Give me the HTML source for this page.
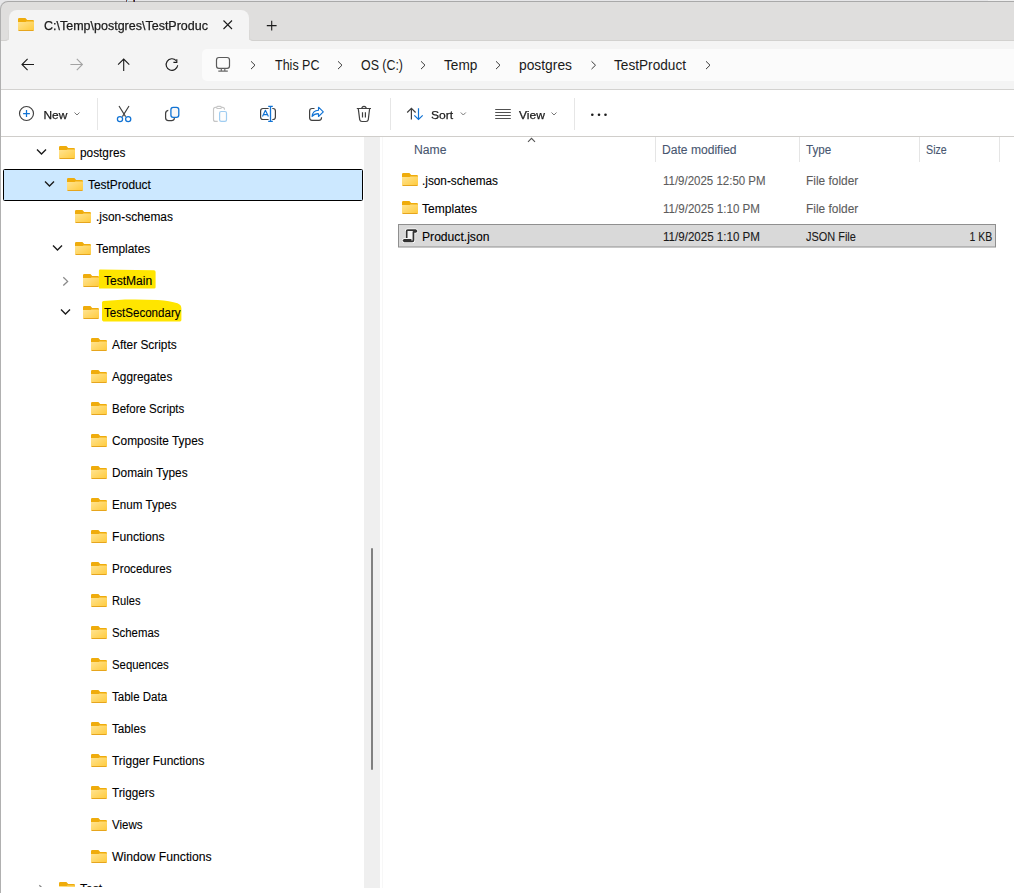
<!DOCTYPE html>
<html><head><meta charset="utf-8">
<style>
html,body{margin:0;padding:0;width:1014px;height:893px;overflow:hidden;background:#e6e6e8;font-family:"Liberation Sans", sans-serif;}
.a{position:absolute;}
svg text{font-family:"Liberation Sans", sans-serif;}
</style></head><body>
<div class="a" style="left:0;top:1px;width:1030px;height:900px;background:#dfdedd;border-top:1px solid #a9a9a9;border-left:1px solid #b0b0b0;border-top-left-radius:8px;box-sizing:border-box;overflow:hidden">
</div>
<!-- nav bar -->
<div class="a" style="left:1px;top:40px;width:1013px;height:49px;background:#f4f4f4"></div>
<!-- tab -->
<div class="a" style="left:9px;top:10px;width:240px;height:31px;background:#f4f4f4;border-radius:8px 8px 0 0"></div>
<div class="a" style="left:1px;top:30px;width:8px;height:11px;box-sizing:border-box;background:#dfdedd;border-bottom:1px solid #d2d1cf;border-right:1px solid #d9d8d6;border-radius:0 0 4px 0"></div>
<div class="a" style="left:249px;top:30px;width:780px;height:11px;box-sizing:border-box;background:#dfdedd;border-bottom:1px solid #d2d1cf;border-left:1px solid #d9d8d6;border-radius:0 0 0 4px"></div>
<div class="a" style="left:202px;top:49px;width:830px;height:32px;background:#fbfbfb;border-radius:5px"></div>
<div class="a" style="left:1px;top:89px;width:1013px;height:1px;background:#d3d2d0"></div>
<!-- toolbar -->
<div class="a" style="left:1px;top:90px;width:1013px;height:46px;background:#fff"></div>
<div class="a" style="left:1px;top:136px;width:1013px;height:1px;background:#d0cecb"></div>
<!-- content -->
<div class="a" style="left:1px;top:137px;width:1013px;height:756px;background:#fff"></div>
<div class="a" style="left:364px;top:137px;width:16px;height:751px;background:#efefef"></div>
<div class="a" style="left:382px;top:137px;width:1px;height:751px;background:#f7f7f7"></div>
<div class="a" style="left:371px;top:548px;width:2px;height:222px;background:#808080;border-radius:1px"></div>
<div class="a" style="left:988px;top:0;width:26px;height:1px;background:#efefef"></div>
<div class="a" style="left:126px;top:0;width:1px;height:2px;background:#7d4a4a"></div>
<div class="a" style="left:127px;top:0;width:1px;height:2px;background:#9fd6f0"></div>
<div class="a" style="left:133px;top:0;width:1px;height:2px;background:#8a5a2a"></div>
<div class="a" style="left:134px;top:0;width:1px;height:2px;background:#2a2a6a"></div>
<svg class="a" style="left:0;top:0" width="1014" height="893" viewBox="0 0 1014 893">
<defs>
<linearGradient id="fg" x1="0" y1="0" x2="1" y2="1">
  <stop offset="0" stop-color="#ffe493"/><stop offset="1" stop-color="#ffca3a"/>
</linearGradient>
<symbol id="fld" viewBox="0 0 16 13">
  <path d="M0 1.2 Q0 0 1.2 0 H7.4 L9.2 2 H14.8 Q16 2 16 3.2 V5 H0 Z" fill="#efac0c"/>
  <path d="M0 4 H7.6 L8.6 3.4 H16 V11.8 Q16 13 14.8 13 H1.2 Q0 13 0 11.8 Z" fill="url(#fg)"/>
  <rect x="0.6" y="12" width="14.8" height="1" fill="#e6a51d"/>
</symbol>
</defs><clipPath id="navclip"><rect x="0" y="137" width="364" height="750"/></clipPath><g clip-path="url(#navclip)"><rect x="3.5" y="169.5" width="359" height="31" rx="1" fill="#cce8ff" stroke="#000" stroke-width="1"/><path d="M98.9 270.8 Q98.9 269.6 100.2 269.6 L154 270.3 Q155.6 270.5 155.6 272 V287.2 Q155.6 288.6 154.2 288.6 H100.3 Q98.9 288.9 98.9 287.5 Z" fill="#ffe500"/><path d="M102 302.5 Q102 301 103.5 300.9 L125 299.6 Q140 299.2 158 300 Q170 300.8 177.5 303.3 Q181.4 304.8 181.4 308.5 V320 Q181.4 321.4 180 321.4 H103.4 Q102 321.2 102 319.8 Z" fill="#ffe500"/><path d="M37.0 149.5 L41.5 154 L46.0 149.5" fill="none" stroke="#1b1b1b" stroke-width="1.35"/><use href="#fld" x="59" y="146" width="16" height="13"/><text x="80" y="157" font-size="12" fill="#000" stroke="#000" stroke-width="0.1" textLength="45.4" lengthAdjust="spacingAndGlyphs" >postgres</text><path d="M45.0 181.5 L49.5 186 L54.0 181.5" fill="none" stroke="#1b1b1b" stroke-width="1.35"/><use href="#fld" x="67" y="178" width="16" height="13"/><text x="88" y="189" font-size="12" fill="#000" stroke="#000" stroke-width="0.1" textLength="62.9" lengthAdjust="spacingAndGlyphs" >TestProduct</text><use href="#fld" x="75" y="210" width="16" height="13"/><text x="96" y="221" font-size="12" fill="#000" stroke="#000" stroke-width="0.1" textLength="77.0" lengthAdjust="spacingAndGlyphs" >.json-schemas</text><path d="M53.0 245.5 L57.5 250 L62.0 245.5" fill="none" stroke="#1b1b1b" stroke-width="1.35"/><use href="#fld" x="75" y="242" width="16" height="13"/><text x="96" y="253" font-size="12" fill="#000" stroke="#000" stroke-width="0.1" textLength="54.2" lengthAdjust="spacingAndGlyphs" >Templates</text><path d="M63.3 277.3 L67.6 281.4 L63.3 285.5" fill="none" stroke="#8a8a8a" stroke-width="1.3"/><use href="#fld" x="83" y="274" width="16" height="13"/><text x="104" y="285" font-size="12" fill="#000" stroke="#000" stroke-width="0.1" textLength="48.2" lengthAdjust="spacingAndGlyphs" >TestMain</text><path d="M61.0 309.5 L65.5 314 L70.0 309.5" fill="none" stroke="#1b1b1b" stroke-width="1.35"/><use href="#fld" x="83" y="306" width="16" height="13"/><text x="104" y="317" font-size="12" fill="#000" stroke="#000" stroke-width="0.1" textLength="76.6" lengthAdjust="spacingAndGlyphs" >TestSecondary</text><use href="#fld" x="91" y="338" width="16" height="13"/><text x="112" y="349" font-size="12" fill="#000" stroke="#000" stroke-width="0.1" textLength="64.7" lengthAdjust="spacingAndGlyphs" >After Scripts</text><use href="#fld" x="91" y="370" width="16" height="13"/><text x="112" y="381" font-size="12" fill="#000" stroke="#000" stroke-width="0.1" textLength="60.3" lengthAdjust="spacingAndGlyphs" >Aggregates</text><use href="#fld" x="91" y="402" width="16" height="13"/><text x="112" y="413" font-size="12" fill="#000" stroke="#000" stroke-width="0.1" textLength="72.3" lengthAdjust="spacingAndGlyphs" >Before Scripts</text><use href="#fld" x="91" y="434" width="16" height="13"/><text x="112" y="445" font-size="12" fill="#000" stroke="#000" stroke-width="0.1" textLength="91.7" lengthAdjust="spacingAndGlyphs" >Composite Types</text><use href="#fld" x="91" y="466" width="16" height="13"/><text x="112" y="477" font-size="12" fill="#000" stroke="#000" stroke-width="0.1" textLength="75.6" lengthAdjust="spacingAndGlyphs" >Domain Types</text><use href="#fld" x="91" y="498" width="16" height="13"/><text x="112" y="509" font-size="12" fill="#000" stroke="#000" stroke-width="0.1" textLength="64.5" lengthAdjust="spacingAndGlyphs" >Enum Types</text><use href="#fld" x="91" y="530" width="16" height="13"/><text x="112" y="541" font-size="12" fill="#000" stroke="#000" stroke-width="0.1" textLength="52.6" lengthAdjust="spacingAndGlyphs" >Functions</text><use href="#fld" x="91" y="562" width="16" height="13"/><text x="112" y="573" font-size="12" fill="#000" stroke="#000" stroke-width="0.1" textLength="59.5" lengthAdjust="spacingAndGlyphs" >Procedures</text><use href="#fld" x="91" y="594" width="16" height="13"/><text x="112" y="605" font-size="12" fill="#000" stroke="#000" stroke-width="0.1" textLength="28.5" lengthAdjust="spacingAndGlyphs" >Rules</text><use href="#fld" x="91" y="626" width="16" height="13"/><text x="112" y="637" font-size="12" fill="#000" stroke="#000" stroke-width="0.1" textLength="47.4" lengthAdjust="spacingAndGlyphs" >Schemas</text><use href="#fld" x="91" y="658" width="16" height="13"/><text x="112" y="669" font-size="12" fill="#000" stroke="#000" stroke-width="0.1" textLength="56.8" lengthAdjust="spacingAndGlyphs" >Sequences</text><use href="#fld" x="91" y="690" width="16" height="13"/><text x="112" y="701" font-size="12" fill="#000" stroke="#000" stroke-width="0.1" textLength="55.1" lengthAdjust="spacingAndGlyphs" >Table Data</text><use href="#fld" x="91" y="722" width="16" height="13"/><text x="112" y="733" font-size="12" fill="#000" stroke="#000" stroke-width="0.1" textLength="33.8" lengthAdjust="spacingAndGlyphs" >Tables</text><use href="#fld" x="91" y="754" width="16" height="13"/><text x="112" y="765" font-size="12" fill="#000" stroke="#000" stroke-width="0.1" textLength="92.5" lengthAdjust="spacingAndGlyphs" >Trigger Functions</text><use href="#fld" x="91" y="786" width="16" height="13"/><text x="112" y="797" font-size="12" fill="#000" stroke="#000" stroke-width="0.1" textLength="42.5" lengthAdjust="spacingAndGlyphs" >Triggers</text><use href="#fld" x="91" y="818" width="16" height="13"/><text x="112" y="829" font-size="12" fill="#000" stroke="#000" stroke-width="0.1" textLength="30.6" lengthAdjust="spacingAndGlyphs" >Views</text><use href="#fld" x="91" y="850" width="16" height="13"/><text x="112" y="861" font-size="12" fill="#000" stroke="#000" stroke-width="0.1" textLength="99.7" lengthAdjust="spacingAndGlyphs" >Window Functions</text><path d="M39.3 885.3 L43.6 889.4 L39.3 893.5" fill="none" stroke="#8a8a8a" stroke-width="1.3"/><use href="#fld" x="59" y="882" width="16" height="13"/><text x="80" y="893" font-size="12" fill="#000" stroke="#000" stroke-width="0.1" >Test</text></g><rect x="398.5" y="224.5" width="597" height="22.5" fill="#d9d9d9" stroke="#8f8f8f" stroke-width="1"/><rect x="655.0" y="137" width="1" height="25" fill="#e5e5e5"/><rect x="799.0" y="137" width="1" height="25" fill="#e5e5e5"/><rect x="919.0" y="137" width="1" height="25" fill="#e5e5e5"/><rect x="999.0" y="137" width="1" height="25" fill="#e5e5e5"/><path d="M528 141.8 L531.5 138.3 L535 141.8" fill="none" stroke="#555" stroke-width="1.1"/><text x="414" y="154" font-size="12" fill="#485670" stroke="#485670" stroke-width="0.1" textLength="32.5" lengthAdjust="spacingAndGlyphs" >Name</text><text x="662" y="154" font-size="12" fill="#485670" stroke="#485670" stroke-width="0.1" textLength="74.6" lengthAdjust="spacingAndGlyphs" >Date modified</text><text x="806" y="154" font-size="12" fill="#485670" stroke="#485670" stroke-width="0.1" textLength="25.3" lengthAdjust="spacingAndGlyphs" >Type</text><text x="926" y="154" font-size="12" fill="#485670" stroke="#485670" stroke-width="0.1" textLength="20.8" lengthAdjust="spacingAndGlyphs" >Size</text><use href="#fld" x="402" y="173" width="16" height="13"/><text x="422" y="184.5" font-size="12" fill="#000" stroke="#000" stroke-width="0.1" textLength="76" lengthAdjust="spacingAndGlyphs" >.json-schemas</text><text x="663" y="184.5" font-size="12" fill="#5c5c5c" stroke="#5c5c5c" stroke-width="0.1" textLength="102.6" lengthAdjust="spacingAndGlyphs" >11/9/2025 12:50 PM</text><text x="806" y="184.5" font-size="12" fill="#5c5c5c" stroke="#5c5c5c" stroke-width="0.1" textLength="52.3" lengthAdjust="spacingAndGlyphs" >File folder</text><use href="#fld" x="402" y="201" width="16" height="13"/><text x="422" y="212.5" font-size="12" fill="#000" stroke="#000" stroke-width="0.1" textLength="55" lengthAdjust="spacingAndGlyphs" >Templates</text><text x="663" y="212.5" font-size="12" fill="#5c5c5c" stroke="#5c5c5c" stroke-width="0.1" textLength="97" lengthAdjust="spacingAndGlyphs" >11/9/2025 1:10 PM</text><text x="806" y="212.5" font-size="12" fill="#5c5c5c" stroke="#5c5c5c" stroke-width="0.1" textLength="52.3" lengthAdjust="spacingAndGlyphs" >File folder</text><g transform="translate(402,228)">
<path d="M4.65 10 V3.3 Q4.65 2.2 5.7 2.2 H13.6 L14.5 3.1 L13.7 3.9 H11.45 V12.2 Q11.45 13.3 10.4 13.3 H2.4 L1.5 12.6 L2.2 11.9 H9.4" fill="none" stroke="#fff" stroke-width="3.4" stroke-linejoin="round"/>
<path d="M5.5 3.2 H10.8 V12.4 H5.5 Z" fill="#f4f4f4"/>
<path d="M4.65 10 V3.3 Q4.65 2.2 5.7 2.2 H13.6 L14.5 3.1 L13.7 3.9 H11.45 V12.2 Q11.45 13.3 10.4 13.3 H2.4 L1.5 12.6 L2.2 11.9 H9.4" fill="none" stroke="#333" stroke-width="1.75" stroke-linejoin="round"/>
</g><text x="422" y="240.5" font-size="12" fill="#000" stroke="#000" stroke-width="0.1" textLength="67.4" lengthAdjust="spacingAndGlyphs" >Product.json</text><text x="663" y="240.5" font-size="12" fill="#1a1a1a" stroke="#1a1a1a" stroke-width="0.1" textLength="97" lengthAdjust="spacingAndGlyphs" >11/9/2025 1:10 PM</text><text x="806" y="240.5" font-size="12" fill="#1a1a1a" stroke="#1a1a1a" stroke-width="0.1" textLength="49.9" lengthAdjust="spacingAndGlyphs" >JSON File</text><text x="969.5" y="240.5" font-size="12" fill="#1a1a1a" stroke="#1a1a1a" stroke-width="0.1" textLength="22.7" lengthAdjust="spacingAndGlyphs" >1 KB</text><use href="#fld" x="18" y="18" width="16" height="13"/><path d="M223.5 20.5 L232 29 M232 20.5 L223.5 29" stroke="#1b1b1b" stroke-width="1.1"/><path d="M271.7 20.7 V30.5 M266.8 25.6 H276.6" stroke="#1b1b1b" stroke-width="1.1"/><path d="M22 64.5 H34 M27.6 58.9 L22 64.5 L27.6 70.1" fill="none" stroke="#1b1b1b" stroke-width="1.1"/><path d="M82.4 64.5 H70.4 M76.8 58.9 L82.4 64.5 L76.8 70.1" fill="none" stroke="#a3a3a3" stroke-width="1.1"/><path d="M123.7 71 V59 M118.1 64.6 L123.7 59 L129.3 64.6" fill="none" stroke="#1b1b1b" stroke-width="1.1"/><path d="M177.7 65.3 A5.8 5.8 0 1 1 176.2 60.6" fill="none" stroke="#1b1b1b" stroke-width="1.15"/><path d="M176.8 59.2 V62.4 H173.4" fill="none" stroke="#1b1b1b" stroke-width="1.15"/><rect x="216.5" y="57.5" width="13" height="10.9" rx="2.4" fill="none" stroke="#5a5a5a" stroke-width="1.2"/><path d="M221.3 68.4 V71 M224.8 68.4 V71 M218.3 71.2 H227.8" stroke="#6a6a6a" stroke-width="1.2"/><path d="M251 61.3 L255 65.2 L251 69.1" fill="none" stroke="#3a3a3a" stroke-width="1"/><path d="M338 61.3 L342 65.2 L338 69.1" fill="none" stroke="#3a3a3a" stroke-width="1"/><path d="M421 61.3 L425 65.2 L421 69.1" fill="none" stroke="#3a3a3a" stroke-width="1"/><path d="M496 61.3 L500 65.2 L496 69.1" fill="none" stroke="#3a3a3a" stroke-width="1"/><path d="M591.5 61.3 L595.5 65.2 L591.5 69.1" fill="none" stroke="#3a3a3a" stroke-width="1"/><path d="M706 61.3 L710 65.2 L706 69.1" fill="none" stroke="#3a3a3a" stroke-width="1"/><text x="275" y="69.6" font-size="14" fill="#1a1a1a" textLength="44.5" lengthAdjust="spacingAndGlyphs" >This PC</text><text x="361" y="69.6" font-size="14" fill="#1a1a1a" textLength="42" lengthAdjust="spacingAndGlyphs" >OS (C:)</text><text x="444" y="69.6" font-size="14" fill="#1a1a1a" textLength="33.3" lengthAdjust="spacingAndGlyphs" >Temp</text><text x="519" y="69.6" font-size="14" fill="#1a1a1a" textLength="53" lengthAdjust="spacingAndGlyphs" >postgres</text><text x="614" y="69.6" font-size="14" fill="#1a1a1a" textLength="72" lengthAdjust="spacingAndGlyphs" >TestProduct</text><circle cx="26.5" cy="113.5" r="7" fill="none" stroke="#404040" stroke-width="1.15"/><path d="M26.5 110.1 V116.9 M23.1 113.5 H29.9" stroke="#1173d4" stroke-width="1.25"/><path d="M74.5 112.5 L77 115 L79.5 112.5" fill="none" stroke="#777" stroke-width="1"/><rect x="97" y="98" width="1" height="32" fill="#e6e6e6"/><rect x="390" y="98" width="1" height="32" fill="#e6e6e6"/><rect x="574" y="98" width="1" height="32" fill="#e6e6e6"/><path d="M119 106 L125.6 116.6 M129 106 L122.4 116.6" stroke="#404040" stroke-width="1.15"/><circle cx="120" cy="119.1" r="2.6" fill="none" stroke="#1173d4" stroke-width="1.25"/><circle cx="128.2" cy="119.1" r="2.6" fill="none" stroke="#1173d4" stroke-width="1.25"/><path d="M168.3 110.3 Q165.6 110.6 165.6 113.5 V117.8 Q165.6 120.6 168.5 120.6 H171.6 Q174.1 120.6 174.5 118.2" fill="none" stroke="#404040" stroke-width="1.25"/><rect x="170.9" y="107.4" width="7.9" height="9.9" rx="2.3" fill="#f7f7f7" stroke="#1173d4" stroke-width="1.3"/><path d="M216.3 107.4 H215.5 Q213.5 107.4 213.5 109.4 V119.4 Q213.5 121.4 215.5 121.4 H217.7 M221.6 107.4 H222.5 Q224.5 107.4 224.5 109.4 V109.8" fill="none" stroke="#c6c6c6" stroke-width="1.15"/><rect x="216.6" y="106.4" width="4.8" height="2.1" rx="1" fill="none" stroke="#c6c6c6" stroke-width="1.1"/><rect x="219.6" y="111.5" width="6.9" height="9.9" rx="1.6" fill="#fdfdfd" stroke="#a0cdf1" stroke-width="1.2"/><path d="M268.6 108.5 H263 Q260.6 108.5 260.6 111 V117 Q260.6 119.5 263 119.5 H268.6 M272.3 108.5 H273 Q275.4 108.5 275.4 111 V117 Q275.4 119.5 273 119.5 H272.3" fill="none" stroke="#404040" stroke-width="1.2"/><path d="M270.5 106.4 V121.4 M268.2 106.4 H272.8 M268.2 121.4 H272.8" stroke="#1173d4" stroke-width="1.3"/><path d="M262.5 116.6 L265.4 110.3 L268.4 116.6 M263.6 114.6 H267.3" fill="none" stroke="#1173d4" stroke-width="1.15" stroke-linejoin="round"/><path d="M314.5 108.5 H312 Q309.6 108.5 309.6 111 V117.8 Q309.6 120.3 312 120.3 H319 Q321.5 120.3 321.5 117.8 V117.2" fill="none" stroke="#404040" stroke-width="1.2"/><path d="M318.5 107.2 L323.3 111.9 L318.5 116.5 V113.7 Q314.3 113.6 312.1 116.5 Q312.6 110.6 318.5 110.3 Z" fill="none" stroke="#1173d4" stroke-width="1.15" stroke-linejoin="round"/><path d="M356.8 108.5 H371 M361.8 108.5 Q362 106.4 364 106.4 Q366 106.4 366.2 108.5 M358.3 108.8 L359.7 119.6 Q360 121.5 362 121.5 H366 Q368 121.5 368.3 119.6 L369.6 108.8 M362.5 112.3 V117.6 M365.4 112.3 V117.6" fill="none" stroke="#404040" stroke-width="1.2"/><path d="M411.4 119.6 V108.4 M407.2 112.5 L411.4 108.3 L415.6 112.5" fill="none" stroke="#404040" stroke-width="1.2"/><path d="M418.5 108.3 V119.4 M414.3 115.3 L418.5 119.5 L422.7 115.3" fill="none" stroke="#1173d4" stroke-width="1.2"/><path d="M460.8 112.5 L463.3 115 L465.8 112.5" fill="none" stroke="#777" stroke-width="1"/><path d="M495.2 109.5 H510.8 M495.2 112.5 H510.8 M495.2 115.5 H510.8 M495.2 118.5 H510.8" stroke="#505050" stroke-width="1.05"/><path d="M551.5 112.5 L554 115 L556.5 112.5" fill="none" stroke="#777" stroke-width="1"/><circle cx="592.3" cy="114.7" r="1.3" fill="#1b1b1b"/><circle cx="599" cy="114.7" r="1.3" fill="#1b1b1b"/><circle cx="605.5" cy="114.7" r="1.3" fill="#1b1b1b"/>
</svg>
<svg class="a" style="left:0;top:0;will-change:transform" width="1014" height="893" viewBox="0 0 1014 893">
<text x="44" y="30" font-size="12.5" fill="#1b1b1b" stroke="#1b1b1b" stroke-width="0.25" >C:\Temp\postgres\TestProduc</text><text x="43.5" y="118.8" font-size="11.6" fill="#1b1b1b" stroke="#1b1b1b" stroke-width="0.25" textLength="23.8" lengthAdjust="spacingAndGlyphs" >New</text><text x="431" y="118.8" font-size="11.8" fill="#1b1b1b" stroke="#1b1b1b" stroke-width="0.25" textLength="22.2" lengthAdjust="spacingAndGlyphs" >Sort</text><text x="519" y="118.8" font-size="11.8" fill="#1b1b1b" stroke="#1b1b1b" stroke-width="0.25" textLength="25.8" lengthAdjust="spacingAndGlyphs" >View</text>
</svg>
</body></html>
